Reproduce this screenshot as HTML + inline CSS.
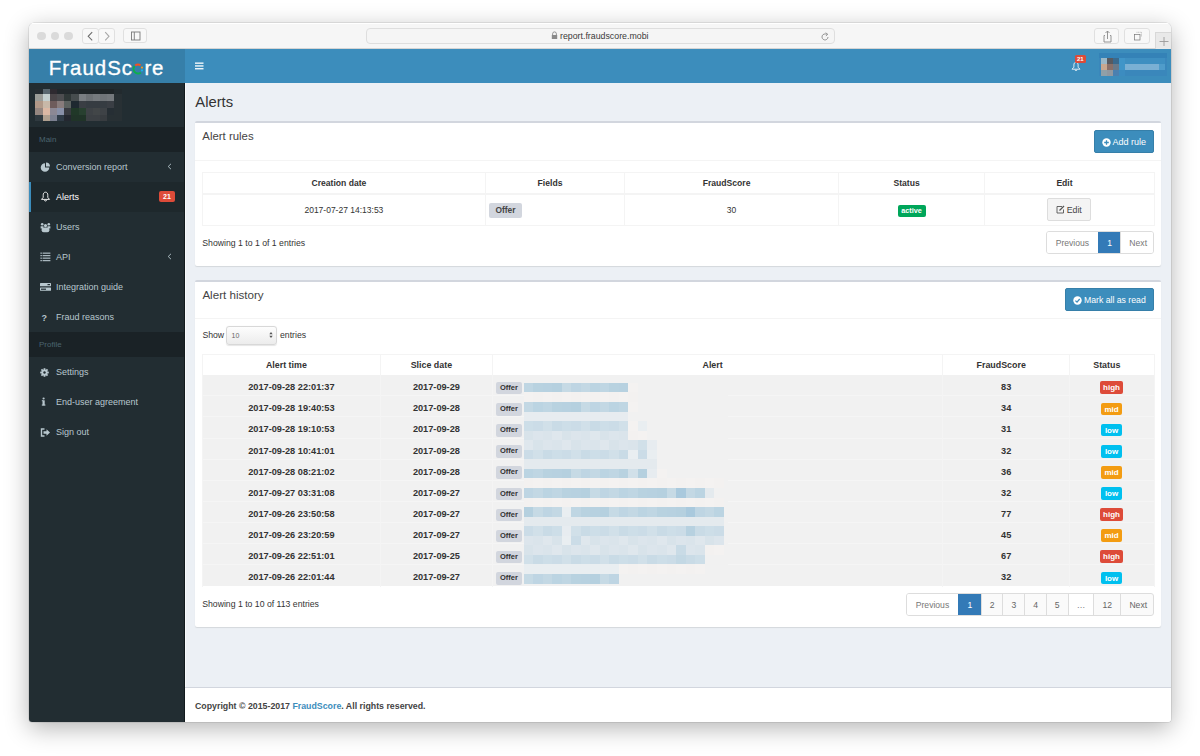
<!DOCTYPE html>
<html><head><meta charset="utf-8"><style>
*{box-sizing:border-box;margin:0;padding:0}
html,body{width:1200px;height:756px;overflow:hidden;background:#fff;font-family:"Liberation Sans",sans-serif;}
.a,.abs{position:absolute}
svg{display:block}
#win{position:absolute;left:29px;top:23px;width:1142px;height:699px;border-radius:5px 5px 3px 3px;overflow:hidden;box-shadow:0 6px 24px rgba(0,0,0,.30),0 0 0 0.5px rgba(0,0,0,.15);background:#ecf0f5}
#title{position:absolute;left:0;top:0;width:1142px;height:26px;background:#f6f6f6;border-bottom:1px solid #d4d4d4;box-shadow:inset 0 1px 0 #fff}
.dot{position:absolute;width:8px;height:8px;border-radius:50%;background:#dadada}
.tbtn{position:absolute;border:1px solid #e0e0e0;border-radius:3px;background:#f8f8f8}
#hdr{position:absolute;left:0;top:26px;width:1142px;height:34px;background:#3c8dbc}
#logo{position:absolute;left:0;top:0;width:156px;height:34px;background:#367fa9}
#side{position:absolute;left:0;top:60px;width:156px;height:639px;background:#222d32}
.sh{position:absolute;left:0;width:156px;height:25px;background:#1a2226;color:#4b646f;font-size:8px;line-height:26px;padding-left:10px}
.mi{position:absolute;left:0;width:156px;height:30px;color:#b8c7ce;font-size:9px;line-height:31px;padding-left:27px}
.mi.act{background:#1e282c;color:#fff;border-left:2px solid #3c8dbc;padding-left:25px}
.mi .ic{position:absolute;left:10px;top:9px;width:12px;height:12px;display:flex;align-items:center;justify-content:center}
.act .ic{left:9px}
.sbadge{position:absolute;left:128px;top:9px;width:16px;height:11px;background:#dd4b39;color:#fff;font-size:7px;font-weight:bold;line-height:11px;text-align:center;border-radius:2px}
.arr{position:absolute;left:138px;top:11px;width:6px;height:8px}
#foot{position:absolute;left:156px;top:664px;width:986px;height:35px;background:#fff;border-top:1px solid #d2d6de;font-size:8.8px;font-weight:bold;color:#444;line-height:36px;padding-left:10px}
.box{position:absolute;background:#fff;border-top:2px solid #d2d6de;border-radius:2px;box-shadow:0 1px 1px rgba(0,0,0,.1)}
.bt{position:absolute;font-size:11.5px;color:#444;line-height:14px;white-space:nowrap}
.btn{position:absolute;background:#3c8dbc;border:1px solid #367fa9;border-radius:2px;color:#fff;font-size:9px;line-height:21px;display:flex;align-items:center;justify-content:center;white-space:nowrap;padding-top:1.5px}
.t{position:absolute;white-space:nowrap;line-height:12px}
.th{font-size:8.6px;font-weight:bold;color:#333}
.td{font-size:8.5px;color:#333}
.tdb{font-size:9.4px;font-weight:bold;color:#333}
.lbl{position:absolute;background:#d2d6de;color:#444;font-weight:bold;border-radius:2px;text-align:center}
.bdg{position:absolute;color:#fff;font-weight:bold;font-size:8px;text-align:center;border-radius:2px}
.pg{position:absolute;border:1px solid #ddd;border-radius:3px;overflow:hidden;background:#fafafa}
.pgi{position:absolute;top:0;height:100%;font-size:8.6px;color:#666;text-align:center;border-left:1px solid #ddd;display:flex;align-items:center;justify-content:center}
.hl{position:absolute;height:1px}
.vl{position:absolute;width:1px}
</style></head><body>
<div id="win">
<div id="title">
<div class="dot" style="left:8.399999999999999px;top:8.699999999999996px;width:8.2px;height:8.2px"></div>
<div class="dot" style="left:21.9px;top:8.699999999999996px;width:8.2px;height:8.2px"></div>
<div class="dot" style="left:35.400000000000006px;top:8.699999999999996px;width:8.2px;height:8.2px"></div>
<div class="tbtn" style="left:52.5px;top:5.199999999999999px;width:17.299999999999997px;height:15.599999999999998px"><svg width="17" height="15" viewBox="0 0 17 15"><path d="M9.2 3.2L5.2 7.3 9.2 11.4" fill="none" stroke="#6f6f6f" stroke-width="1.1"/></svg></div>
<div class="tbtn" style="left:69.3px;top:5.199999999999999px;width:17.10000000000001px;height:15.599999999999998px"><svg width="17" height="15" viewBox="0 0 17 15"><path d="M6.2 3.2L10 7.3 6.2 11.4" fill="none" stroke="#a8a8a8" stroke-width="1.1"/></svg></div>
<div class="tbtn" style="left:93.7px;top:5.300000000000001px;width:24.299999999999997px;height:15.2px"><svg width="24" height="15" viewBox="0 0 24 15"><rect x="7.5" y="3" width="8.5" height="8" fill="none" stroke="#7a7a7a" stroke-width="0.9"/><line x1="10.3" y1="3" x2="10.3" y2="11" stroke="#7a7a7a" stroke-width="0.9"/></svg></div>
<div class="tbtn" style="left:336.8px;top:5.300000000000001px;width:469px;height:15.5px;background:#f5f5f5;border-color:#dedede;border-radius:4px"></div>
<div class="a" style="left:522px;top:8px"><svg width="7" height="9" viewBox="0 0 7 9"><path d="M1.6 4V2.8A1.9 1.9 0 0 1 5.4 2.8V4" fill="none" stroke="#8a8a8a" stroke-width="0.9"/><rect x="0.8" y="4" width="5.4" height="4" fill="#8a8a8a"/></svg></div>
<div class="t" style="left:531px;top:6.5px;font-size:8.8px;color:#3a3a3a;line-height:12px">report.fraudscore.mobi</div>
<div class="a" style="left:791px;top:8.5px"><svg width="10" height="10" viewBox="0 0 10 10"><path d="M8 5A3 3 0 1 1 6.6 2.4" fill="none" stroke="#8a8a8a" stroke-width="0.9"/><path d="M5.6 0.8L7.8 2.3 5.9 3.9" fill="none" stroke="#8a8a8a" stroke-width="0.9"/></svg></div>
<div class="tbtn" style="left:1064.8px;top:5.300000000000001px;width:25.40000000000009px;height:15.400000000000002px"><svg width="25" height="15" viewBox="0 0 25 15"><path d="M10 6.5H9V13H16V6.5H15" fill="none" stroke="#8a8a8a" stroke-width="0.9"/><path d="M12.5 10V2M10.5 4L12.5 2 14.5 4" fill="none" stroke="#8a8a8a" stroke-width="0.9"/></svg></div>
<div class="tbtn" style="left:1095px;top:5.300000000000001px;width:25.5px;height:15.400000000000002px"><svg width="25" height="15" viewBox="0 0 25 15"><rect x="9.5" y="5.5" width="5.5" height="5.5" fill="none" stroke="#777" stroke-width="0.7"/><path d="M11.5 3.3H16.5V8" fill="none" stroke="#999" stroke-width="0.6" stroke-dasharray="1 0.6"/></svg></div>
<div class="a" style="left:1126.3px;top:9.200000000000003px;width:20px;height:17px;background:#e9e9e9;border-left:1px solid #d8d8d8;border-top:1px solid #d8d8d8"><svg width="16" height="16" viewBox="0 0 16 16"><path d="M8 4V13M3.5 8.5H12.5" stroke="#9a9a9a" stroke-width="0.9"/></svg></div>
</div>
<div id="hdr">
<div id="logo"></div>
<div class="t" style="left:19.700000000000003px;top:7.900000000000001px;font-size:20.4px;line-height:22px;color:#fff;letter-spacing:1.05px;-webkit-text-stroke:0.35px #fff">FraudSc</div>
<div class="t" style="left:115.6px;top:7.900000000000001px;font-size:20.4px;line-height:22px;color:#fff;letter-spacing:0.6px;-webkit-text-stroke:0.35px #fff">re</div>
<div class="a" style="left:102.9px;top:14.200000000000003px"><svg width="12" height="12" viewBox="0 0 12 12"><path d="M3.2 2.6A4.4 4.4 0 0 1 8.6 2.4" fill="none" stroke="#f4511e" stroke-width="2"/><path d="M2.6 3.2A4.4 4.4 0 0 0 8.8 9.4" fill="none" stroke="#0db04b" stroke-width="2"/><circle cx="10" cy="4.6" r="1.1" fill="#f7941d"/><circle cx="10" cy="7.4" r="1.1" fill="#1ab1e6"/></svg></div>
<div class="a" style="left:166px;top:13px"><svg width="9" height="8" viewBox="0 0 9 8"><g fill="#fff"><rect x="0" y="0.5" width="8.5" height="1.3"/><rect x="0" y="3.3" width="8.5" height="1.3"/><rect x="0" y="6.1" width="8.5" height="1.3"/></g></svg></div>
<div class="a" style="left:1041.5px;top:11.700000000000003px"><svg width="10" height="10" viewBox="0 0 10 10"><path d="M5 1.2C3.4 1.2 2.9 2.6 2.9 4V6.2L1 8.2H9L7.1 6.2V4C7.1 2.6 6.6 1.2 5 1.2z" fill="none" stroke="#fff" stroke-width="0.8"/><path d="M4 8.6A1 1 0 0 0 6 8.6" fill="none" stroke="#fff" stroke-width="0.8"/></svg></div>
<div class="a" style="left:1046px;top:6px;width:10.7px;height:7.8px;background:#dd4b39;border-radius:1.5px;color:#fff;font-size:6px;font-weight:bold;line-height:8px;text-align:center">21</div>
<div class="a" style="left:1070.2px;top:3.7px;width:68.2px;height:23.8px;background:#3a87bb"></div>
<div class="a" style="left:1070.2px;top:3.7px;width:68.2px;height:5.3px;background:#3482b7"></div>
<div class="a" style="left:1072.0px;top:9.0px;width:6.2px;height:6.2px;background:#9ab8c8"></div>
<div class="a" style="left:1078.0px;top:9.0px;width:6.2px;height:6.2px;background:#585a60"></div>
<div class="a" style="left:1084.1px;top:9.0px;width:6.3px;height:6.2px;background:#3a6a8e"></div>
<div class="a" style="left:1090.2px;top:9.0px;width:6.2px;height:6.2px;background:#4095c8"></div>
<div class="a" style="left:1072.0px;top:15.0px;width:6.2px;height:6.2px;background:#c8a890"></div>
<div class="a" style="left:1078.0px;top:15.0px;width:6.2px;height:6.2px;background:#8a7068"></div>
<div class="a" style="left:1084.1px;top:15.0px;width:6.3px;height:6.2px;background:#6a7a8a"></div>
<div class="a" style="left:1090.2px;top:15.0px;width:6.2px;height:6.2px;background:#4095c8"></div>
<div class="a" style="left:1072.0px;top:21.0px;width:6.2px;height:6.2px;background:#90a0a8"></div>
<div class="a" style="left:1078.0px;top:21.0px;width:6.2px;height:6.2px;background:#9098a0"></div>
<div class="a" style="left:1084.1px;top:21.0px;width:6.3px;height:6.2px;background:#4a80b0"></div>
<div class="a" style="left:1090.2px;top:21.0px;width:6.2px;height:6.2px;background:#3c8cc0"></div>
<div class="a" style="left:1096.0px;top:15.0px;width:34.0px;height:6.0px;background:#7ab0d4"></div>
<div class="a" style="left:1130.0px;top:15.0px;width:6.0px;height:6.0px;background:#4f9cca"></div>
<div class="a" style="left:1096.0px;top:9.0px;width:40.0px;height:6.0px;background:#3e8fc1"></div>
</div>
<div id="side">
<div class="abs" style="left:6px;top:6px;width:87px;height:32px">
<div class="abs" style="left:0px;top:0px;width:8px;height:5px;background:#262e33"></div>
<div class="abs" style="left:8px;top:0px;width:7px;height:5px;background:#5a6870"></div>
<div class="abs" style="left:15px;top:0px;width:7px;height:5px;background:#2e2a30"></div>
<div class="abs" style="left:22px;top:0px;width:7px;height:5px;background:#22282c"></div>
<div class="abs" style="left:29px;top:0px;width:7px;height:5px;background:#22282c"></div>
<div class="abs" style="left:36px;top:0px;width:8px;height:5px;background:#22282c"></div>
<div class="abs" style="left:44px;top:0px;width:7px;height:5px;background:#1f2528"></div>
<div class="abs" style="left:51px;top:0px;width:7px;height:5px;background:#1f2528"></div>
<div class="abs" style="left:58px;top:0px;width:7px;height:5px;background:#1f2528"></div>
<div class="abs" style="left:65px;top:0px;width:7px;height:5px;background:#1f2528"></div>
<div class="abs" style="left:72px;top:0px;width:7px;height:5px;background:#1f2528"></div>
<div class="abs" style="left:79px;top:0px;width:8px;height:5px;background:#222a2e"></div>
<div class="abs" style="left:0px;top:5px;width:8px;height:7px;background:#9a9c98"></div>
<div class="abs" style="left:8px;top:5px;width:7px;height:7px;background:#c4d0d0"></div>
<div class="abs" style="left:15px;top:5px;width:7px;height:7px;background:#4a4548"></div>
<div class="abs" style="left:22px;top:5px;width:7px;height:7px;background:#4d4d50"></div>
<div class="abs" style="left:29px;top:5px;width:7px;height:7px;background:#303838"></div>
<div class="abs" style="left:36px;top:5px;width:8px;height:7px;background:#464c4e"></div>
<div class="abs" style="left:44px;top:5px;width:7px;height:7px;background:#7a7e82"></div>
<div class="abs" style="left:51px;top:5px;width:7px;height:7px;background:#6e7276"></div>
<div class="abs" style="left:58px;top:5px;width:7px;height:7px;background:#767a7e"></div>
<div class="abs" style="left:65px;top:5px;width:7px;height:7px;background:#707478"></div>
<div class="abs" style="left:72px;top:5px;width:7px;height:7px;background:#74787c"></div>
<div class="abs" style="left:79px;top:5px;width:8px;height:7px;background:#283034"></div>
<div class="abs" style="left:0px;top:12px;width:8px;height:7px;background:#b09888"></div>
<div class="abs" style="left:8px;top:12px;width:7px;height:7px;background:#c8b8a8"></div>
<div class="abs" style="left:15px;top:12px;width:7px;height:7px;background:#6e5c5c"></div>
<div class="abs" style="left:22px;top:12px;width:7px;height:7px;background:#887c7c"></div>
<div class="abs" style="left:29px;top:12px;width:7px;height:7px;background:#5c6260"></div>
<div class="abs" style="left:36px;top:12px;width:8px;height:7px;background:#1e2830"></div>
<div class="abs" style="left:44px;top:12px;width:7px;height:7px;background:#3a3e44"></div>
<div class="abs" style="left:51px;top:12px;width:7px;height:7px;background:#363c42"></div>
<div class="abs" style="left:58px;top:12px;width:7px;height:7px;background:#363c42"></div>
<div class="abs" style="left:65px;top:12px;width:7px;height:7px;background:#363c42"></div>
<div class="abs" style="left:72px;top:12px;width:7px;height:7px;background:#3a3e44"></div>
<div class="abs" style="left:79px;top:12px;width:8px;height:7px;background:#283034"></div>
<div class="abs" style="left:0px;top:19px;width:8px;height:7px;background:#948680"></div>
<div class="abs" style="left:8px;top:19px;width:7px;height:7px;background:#dcb8a4"></div>
<div class="abs" style="left:15px;top:19px;width:7px;height:7px;background:#8c8894"></div>
<div class="abs" style="left:22px;top:19px;width:7px;height:7px;background:#8890a8"></div>
<div class="abs" style="left:29px;top:19px;width:7px;height:7px;background:#383a40"></div>
<div class="abs" style="left:36px;top:19px;width:8px;height:7px;background:#203828"></div>
<div class="abs" style="left:44px;top:19px;width:7px;height:7px;background:#284030"></div>
<div class="abs" style="left:51px;top:19px;width:7px;height:7px;background:#3e4246"></div>
<div class="abs" style="left:58px;top:19px;width:7px;height:7px;background:#424648"></div>
<div class="abs" style="left:65px;top:19px;width:7px;height:7px;background:#3e4246"></div>
<div class="abs" style="left:72px;top:19px;width:7px;height:7px;background:#262e34"></div>
<div class="abs" style="left:79px;top:19px;width:8px;height:7px;background:#283034"></div>
<div class="abs" style="left:0px;top:26px;width:8px;height:6px;background:#303a40"></div>
<div class="abs" style="left:8px;top:26px;width:7px;height:6px;background:#b0a090"></div>
<div class="abs" style="left:15px;top:26px;width:7px;height:6px;background:#7c8090"></div>
<div class="abs" style="left:22px;top:26px;width:7px;height:6px;background:#303c48"></div>
<div class="abs" style="left:29px;top:26px;width:7px;height:6px;background:#242830"></div>
<div class="abs" style="left:36px;top:26px;width:8px;height:6px;background:#203428"></div>
<div class="abs" style="left:44px;top:26px;width:7px;height:6px;background:#203428"></div>
<div class="abs" style="left:51px;top:26px;width:7px;height:6px;background:#3c4044"></div>
<div class="abs" style="left:58px;top:26px;width:7px;height:6px;background:#3c4044"></div>
<div class="abs" style="left:65px;top:26px;width:7px;height:6px;background:#383c40"></div>
<div class="abs" style="left:72px;top:26px;width:7px;height:6px;background:#283034"></div>
<div class="abs" style="left:79px;top:26px;width:8px;height:6px;background:#283034"></div>
</div>
<div class="sh" style="top:44px">Main</div>
<div class="mi" style="top:69px"><span class="ic"><svg width="11" height="11" viewBox="0 0 11 11"><path d="M5 1.2A4.3 4.3 0 1 0 9.3 5.5H5z" fill="#b8c7ce"/><path d="M6 0.5V4.6H10A4.2 4.2 0 0 0 6 0.5z" fill="#b8c7ce"/></svg></span>Conversion report<span class="arr"><svg width="5" height="7" viewBox="0 0 5 7"><path d="M4 0.8L1.2 3.5 4 6.2" fill="none" stroke="#b8c7ce" stroke-width="0.9"/></svg></span></div>
<div class="mi act" style="top:99px"><span class="ic"><svg width="11" height="11" viewBox="0 0 11 11" style="margin-left:-2px;margin-top:-1px"><path d="M5.5 1.2C3.7 1.2 3.2 2.7 3.2 4.3V6.4L1.5 8.4H9.5L7.8 6.4V4.3C7.8 2.7 7.3 1.2 5.5 1.2z" fill="none" stroke="#fff" stroke-width="0.9"/><path d="M4.5 9A1 1 0 0 0 6.5 9" fill="none" stroke="#fff" stroke-width="0.9"/></svg></span>Alerts<span class="sbadge">21</span></div>
<div class="mi" style="top:129px"><span class="ic"><svg width="11" height="11" viewBox="0 0 11 11" style="margin-left:0.5px"><g fill="#b8c7ce"><circle cx="5.5" cy="3.6" r="1.6"/><circle cx="2.2" cy="2.2" r="1.3"/><circle cx="8.8" cy="2.2" r="1.3"/><path d="M0.6 4.2H3.6L3.2 6.5H0.6z"/><path d="M10.4 4.2H7.4L7.8 6.5H10.4z"/><rect x="1.6" y="5.6" width="7.8" height="4.6" rx="2"/></g></svg></span>Users</div>
<div class="mi" style="top:159px"><span class="ic"><svg width="11" height="10" viewBox="0 0 11 10" style="margin-left:1px"><g fill="#b8c7ce"><rect x="0.4" y="0.6" width="1.5" height="1.1"/><rect x="2.6" y="0.6" width="7.8" height="1.1"/><rect x="0.4" y="3.1" width="1.5" height="1.1"/><rect x="2.6" y="3.1" width="7.8" height="1.1"/><rect x="0.4" y="5.6" width="1.5" height="1.1"/><rect x="2.6" y="5.6" width="7.8" height="1.1"/><rect x="0.4" y="8.1" width="1.5" height="1.1"/><rect x="2.6" y="8.1" width="7.8" height="1.1"/></g></svg></span>API<span class="arr"><svg width="5" height="7" viewBox="0 0 5 7"><path d="M4 0.8L1.2 3.5 4 6.2" fill="none" stroke="#b8c7ce" stroke-width="0.9"/></svg></span></div>
<div class="mi" style="top:189px"><span class="ic"><svg width="11" height="10" viewBox="0 0 11 10"><g fill="#b8c7ce"><rect x="0" y="1" width="11" height="3.2" rx="0.5"/><rect x="0" y="5.6" width="11" height="3.2" rx="0.5"/></g><rect x="1" y="6.6" width="5" height="1.2" fill="#222d32"/><rect x="7.5" y="2" width="2.5" height="1.2" fill="#222d32"/></svg></span>Integration guide</div>
<div class="mi" style="top:219px"><span class="ic"><svg width="11" height="11" viewBox="0 0 11 11"><text x="4.3" y="8.5" font-family="Liberation Sans" font-weight="bold" font-size="9" fill="#b8c7ce" text-anchor="middle">?</text></svg></span>Fraud reasons</div>
<div class="sh" style="top:249px">Profile</div>
<div class="mi" style="top:274px"><span class="ic"><svg width="11" height="11" viewBox="0 0 11 11" style="margin-left:-1px"><g fill="#b8c7ce"><circle cx="5.5" cy="5.5" r="3.1"/><rect x="4.6" y="1.2" width="1.8" height="8.6"/><rect x="1.2" y="4.6" width="8.6" height="1.8"/><rect x="4.6" y="1.2" width="1.8" height="8.6" transform="rotate(45 5.5 5.5)"/><rect x="4.6" y="1.2" width="1.8" height="8.6" transform="rotate(-45 5.5 5.5)"/></g><circle cx="5.5" cy="5.5" r="1.2" fill="#222d32"/></svg></span>Settings</div>
<div class="mi" style="top:304px"><span class="ic"><svg width="11" height="11" viewBox="0 0 11 11"><g fill="#b8c7ce"><circle cx="3.6" cy="1.5" r="1.1"/><rect x="2.5" y="3.3" width="2.2" height="5"/><rect x="1.8" y="7.5" width="3.6" height="1.1"/><rect x="1.8" y="3.3" width="1.3" height="0.9"/></g></svg></span>End-user agreement</div>
<div class="mi" style="top:334px"><span class="ic"><svg width="11" height="11" viewBox="0 0 11 11"><path d="M4.5 2H1.5V9H4.5" fill="none" stroke="#b8c7ce" stroke-width="1.4"/><path d="M3.5 4.3H6.5V2.3L10 5.5 6.5 8.7V6.7H3.5z" fill="#b8c7ce"/></svg></span>Sign out</div>
  </div>
<div class="a" style="left:155.2px;top:60.0px;width:0.8px;height:638.5px;background:#121a1d"></div>
<div class="a" style="left:156.0px;top:60.0px;width:1.2px;height:604.0px;background:#f8f9fb"></div>
<div class="t " style="left:166.3px;top:73.3px;font-size:14.8px;color:#333">Alerts</div>
<div class="box" style="left:166px;top:98px;width:966px;height:144.5px"></div>
<div class="a" style="left:166.0px;top:137.0px;width:966.0px;height:1.0px;background:#f4f4f4"></div>
<div class="t " style="left:173.3px;top:107.4px;font-size:11.4px;color:#444">Alert rules</div>
<div class="btn" style="left:1065px;top:107px;width:60px;height:23px"><svg width="9" height="9" viewBox="0 0 9 9" style="margin-right:1.5px"><circle cx="4.5" cy="4.5" r="4.2" fill="#fff"/><path d="M4.5 2.2V6.8M2.2 4.5H6.8" stroke="#3c8dbc" stroke-width="1.3"/></svg>Add rule</div>
<div class="a" style="left:173.3px;top:149.0px;width:952.1px;height:1.0px;background:#f4f4f4"></div>
<div class="a" style="left:173.3px;top:170.0px;width:952.1px;height:2.0px;background:#f4f4f4"></div>
<div class="a" style="left:173.3px;top:202.0px;width:952.1px;height:1.0px;background:#f4f4f4"></div>
<div class="a" style="left:172.8px;top:149.0px;width:1.0px;height:54.0px;background:#f4f4f4"></div>
<div class="a" style="left:455.9px;top:149.0px;width:1.0px;height:54.0px;background:#f4f4f4"></div>
<div class="a" style="left:595.0px;top:149.0px;width:1.0px;height:54.0px;background:#f4f4f4"></div>
<div class="a" style="left:809.3px;top:149.0px;width:1.0px;height:54.0px;background:#f4f4f4"></div>
<div class="a" style="left:955.0px;top:149.0px;width:1.0px;height:54.0px;background:#f4f4f4"></div>
<div class="a" style="left:1124.9px;top:149.0px;width:1.0px;height:54.0px;background:#f4f4f4"></div>
<div class="t th" style="left:159.9px;top:154.3px;width:300px;text-align:center;font-size:8.6px;">Creation date</div>
<div class="t th" style="left:371.0px;top:154.3px;width:300px;text-align:center;font-size:8.6px;">Fields</div>
<div class="t th" style="left:547.6px;top:154.3px;width:300px;text-align:center;font-size:8.6px;">FraudScore</div>
<div class="t th" style="left:727.6px;top:154.3px;width:300px;text-align:center;font-size:8.6px;">Status</div>
<div class="t th" style="left:885.5px;top:154.3px;width:300px;text-align:center;font-size:8.6px;">Edit</div>
<div class="t td" style="left:164.9px;top:181.3px;width:300px;text-align:center;font-size:8.5px;">2017-07-27 14:13:53</div>
<div class="lbl" style="left:459.75px;top:179.5px;width:33.3px;height:15.8px;font-size:8.4px;line-height:15.8px">Offer</div>
<div class="t td" style="left:552.6px;top:181.3px;width:300px;text-align:center;font-size:8.5px;">30</div>
<div class="bdg" style="left:868.5px;top:181.5px;width:28px;height:12px;line-height:12px;background:#00a65a;font-size:7.3px">active</div>
<div class="a" style="left:1018px;top:175px;width:44px;height:23px;border:1px solid #ddd;background:#f4f4f4;border-radius:2px;display:flex;align-items:center;justify-content:center;font-size:8.8px;color:#444"><svg width="9" height="9" viewBox="0 0 9 9" style="margin-right:1.5px"><path d="M6 1.5H1V8H7.5V4.5" fill="none" stroke="#555" stroke-width="0.9"/><path d="M3.5 5.5L8 1" stroke="#555" stroke-width="1.2"/></svg>Edit</div>
<div class="t td" style="left:173.3px;top:213.6px;font-size:8.7px;">Showing 1 to 1 of 1 entries</div>
<div class="pg" style="left:1016.5px;top:208.2px;width:108.9px;height:23.1px"><div class="pgi" style="left:0;width:51.8px;border-left:none;background:#fff;color:#777">Previous</div><div class="pgi" style="left:51.8px;width:21.7px;background:#337ab7;color:#fff;border-color:#337ab7">1</div><div class="pgi" style="left:73.5px;width:35.4px;background:#fff;color:#777">Next</div></div>
<div class="box" style="left:166px;top:256.5px;width:966px;height:347.7px"></div>
<div class="a" style="left:166.0px;top:294.5px;width:966.0px;height:1.0px;background:#f4f4f4"></div>
<div class="t " style="left:173.4px;top:265.8px;font-size:11.6px;color:#444">Alert history</div>
<div class="btn" style="left:1036.1px;top:265.1px;width:89px;height:23px;font-size:8.7px"><svg width="9" height="9" viewBox="0 0 9 9" style="margin-right:1.5px"><circle cx="4.5" cy="4.5" r="4.2" fill="#fff"/><path d="M2.4 4.6L4 6.1 6.7 3" fill="none" stroke="#3c8dbc" stroke-width="1.3"/></svg>Mark all as read</div>
<div class="t td" style="left:173.4px;top:306.4px;font-size:8.7px;">Show</div>
<div class="a" style="left:197.2px;top:302.6px;width:50.8px;height:19.8px;border:1px solid #d8d8d8;border-radius:3px;background:linear-gradient(#fdfdfd,#ececec);box-shadow:0 0.5px 1px rgba(0,0,0,.1)"></div>
<div class="t td" style="left:202.5px;top:307.2px;font-size:7px;color:#666">10</div>
<div class="a" style="left:239.5px;top:308px"><svg width="4" height="8" viewBox="0 0 4 8"><path d="M0.3 3.2L2 1 3.7 3.2zM0.3 4.8L2 7 3.7 4.8z" fill="#555"/></svg></div>
<div class="t td" style="left:251.0px;top:306.4px;font-size:8.7px;">entries</div>
<div class="a" style="left:173.4px;top:330.8px;width:951.6px;height:1.0px;background:#f4f4f4"></div>
<div class="a" style="left:173.4px;top:351.6px;width:951.6px;height:211.9px;background:#f1f1f1"></div>
<div class="a" style="left:172.9px;top:330.8px;width:1.0px;height:20.8px;background:#f4f4f4"></div>
<div class="a" style="left:350.8px;top:330.8px;width:1.0px;height:20.8px;background:#f4f4f4"></div>
<div class="a" style="left:463.0px;top:330.8px;width:1.0px;height:20.8px;background:#f4f4f4"></div>
<div class="a" style="left:913.2px;top:330.8px;width:1.0px;height:20.8px;background:#f4f4f4"></div>
<div class="a" style="left:1040.2px;top:330.8px;width:1.0px;height:20.8px;background:#f4f4f4"></div>
<div class="a" style="left:1124.5px;top:330.8px;width:1.0px;height:20.8px;background:#f4f4f4"></div>
<div class="t th" style="left:107.4px;top:336.3px;width:300px;text-align:center;font-size:8.9px;">Alert time</div>
<div class="t th" style="left:252.4px;top:336.3px;width:300px;text-align:center;font-size:8.9px;">Slice date</div>
<div class="t th" style="left:533.6px;top:336.3px;width:300px;text-align:center;font-size:8.9px;">Alert</div>
<div class="t th" style="left:822.2px;top:336.3px;width:300px;text-align:center;font-size:8.9px;">FraudScore</div>
<div class="t th" style="left:927.8px;top:336.3px;width:300px;text-align:center;font-size:8.9px;">Status</div>
<div class="t tdb" style="left:112.4px;top:358.1px;width:300px;text-align:center;font-size:9.2px;">2017-09-28 22:01:37</div>
<div class="t tdb" style="left:257.4px;top:358.1px;width:300px;text-align:center;font-size:9.2px;">2017-09-29</div>
<div class="t tdb" style="left:827.2px;top:358.1px;width:300px;text-align:center;font-size:9.2px;">83</div>
<div class="lbl" style="left:467.2px;top:358.9px;width:25.6px;height:12.5px;font-size:7.5px;line-height:12.5px;color:#333">Offer</div>
<div class="bdg" style="left:1071.0px;top:358.4px;width:23px;height:12.8px;line-height:14px;background:#dd4b39">high</div>
<div class="a" style="left:173.4px;top:372.2px;width:951.6px;height:1.0px;background:#f5f5f5"></div>
<div class="t tdb" style="left:112.4px;top:379.3px;width:300px;text-align:center;font-size:9.2px;">2017-09-28 19:40:53</div>
<div class="t tdb" style="left:257.4px;top:379.3px;width:300px;text-align:center;font-size:9.2px;">2017-09-28</div>
<div class="t tdb" style="left:827.2px;top:379.3px;width:300px;text-align:center;font-size:9.2px;">34</div>
<div class="lbl" style="left:467.2px;top:380.0px;width:25.6px;height:12.5px;font-size:7.5px;line-height:12.5px;color:#333">Offer</div>
<div class="bdg" style="left:1071.8px;top:379.5px;width:21.5px;height:12.8px;line-height:14px;background:#f39c12">mid</div>
<div class="a" style="left:173.4px;top:393.4px;width:951.6px;height:1.0px;background:#f5f5f5"></div>
<div class="t tdb" style="left:112.4px;top:400.4px;width:300px;text-align:center;font-size:9.2px;">2017-09-28 19:10:53</div>
<div class="t tdb" style="left:257.4px;top:400.4px;width:300px;text-align:center;font-size:9.2px;">2017-09-28</div>
<div class="t tdb" style="left:827.2px;top:400.4px;width:300px;text-align:center;font-size:9.2px;">31</div>
<div class="lbl" style="left:467.2px;top:401.2px;width:25.6px;height:12.5px;font-size:7.5px;line-height:12.5px;color:#333">Offer</div>
<div class="bdg" style="left:1071.8px;top:400.7px;width:21.5px;height:12.8px;line-height:14px;background:#00c0ef">low</div>
<div class="a" style="left:173.4px;top:414.5px;width:951.6px;height:1.0px;background:#f5f5f5"></div>
<div class="t tdb" style="left:112.4px;top:421.5px;width:300px;text-align:center;font-size:9.2px;">2017-09-28 10:41:01</div>
<div class="t tdb" style="left:257.4px;top:421.5px;width:300px;text-align:center;font-size:9.2px;">2017-09-28</div>
<div class="t tdb" style="left:827.2px;top:421.5px;width:300px;text-align:center;font-size:9.2px;">32</div>
<div class="lbl" style="left:467.2px;top:422.3px;width:25.6px;height:12.5px;font-size:7.5px;line-height:12.5px;color:#333">Offer</div>
<div class="bdg" style="left:1071.8px;top:421.8px;width:21.5px;height:12.8px;line-height:14px;background:#00c0ef">low</div>
<div class="a" style="left:173.4px;top:435.6px;width:951.6px;height:1.0px;background:#f5f5f5"></div>
<div class="t tdb" style="left:112.4px;top:442.7px;width:300px;text-align:center;font-size:9.2px;">2017-09-28 08:21:02</div>
<div class="t tdb" style="left:257.4px;top:442.7px;width:300px;text-align:center;font-size:9.2px;">2017-09-28</div>
<div class="t tdb" style="left:827.2px;top:442.7px;width:300px;text-align:center;font-size:9.2px;">36</div>
<div class="lbl" style="left:467.2px;top:443.4px;width:25.6px;height:12.5px;font-size:7.5px;line-height:12.5px;color:#333">Offer</div>
<div class="bdg" style="left:1071.8px;top:442.9px;width:21.5px;height:12.8px;line-height:14px;background:#f39c12">mid</div>
<div class="a" style="left:173.4px;top:456.8px;width:951.6px;height:1.0px;background:#f5f5f5"></div>
<div class="t tdb" style="left:112.4px;top:463.8px;width:300px;text-align:center;font-size:9.2px;">2017-09-27 03:31:08</div>
<div class="t tdb" style="left:257.4px;top:463.8px;width:300px;text-align:center;font-size:9.2px;">2017-09-27</div>
<div class="t tdb" style="left:827.2px;top:463.8px;width:300px;text-align:center;font-size:9.2px;">32</div>
<div class="lbl" style="left:467.2px;top:464.6px;width:25.6px;height:12.5px;font-size:7.5px;line-height:12.5px;color:#333">Offer</div>
<div class="bdg" style="left:1071.8px;top:464.1px;width:21.5px;height:12.8px;line-height:14px;background:#00c0ef">low</div>
<div class="a" style="left:173.4px;top:477.9px;width:951.6px;height:1.0px;background:#f5f5f5"></div>
<div class="t tdb" style="left:112.4px;top:484.9px;width:300px;text-align:center;font-size:9.2px;">2017-09-26 23:50:58</div>
<div class="t tdb" style="left:257.4px;top:484.9px;width:300px;text-align:center;font-size:9.2px;">2017-09-27</div>
<div class="t tdb" style="left:827.2px;top:484.9px;width:300px;text-align:center;font-size:9.2px;">77</div>
<div class="lbl" style="left:467.2px;top:485.7px;width:25.6px;height:12.5px;font-size:7.5px;line-height:12.5px;color:#333">Offer</div>
<div class="bdg" style="left:1071.0px;top:485.2px;width:23px;height:12.8px;line-height:14px;background:#dd4b39">high</div>
<div class="a" style="left:173.4px;top:499.0px;width:951.6px;height:1.0px;background:#f5f5f5"></div>
<div class="t tdb" style="left:112.4px;top:506.1px;width:300px;text-align:center;font-size:9.2px;">2017-09-26 23:20:59</div>
<div class="t tdb" style="left:257.4px;top:506.1px;width:300px;text-align:center;font-size:9.2px;">2017-09-27</div>
<div class="t tdb" style="left:827.2px;top:506.1px;width:300px;text-align:center;font-size:9.2px;">45</div>
<div class="lbl" style="left:467.2px;top:506.8px;width:25.6px;height:12.5px;font-size:7.5px;line-height:12.5px;color:#333">Offer</div>
<div class="bdg" style="left:1071.8px;top:506.3px;width:21.5px;height:12.8px;line-height:14px;background:#f39c12">mid</div>
<div class="a" style="left:173.4px;top:520.1px;width:951.6px;height:1.0px;background:#f5f5f5"></div>
<div class="t tdb" style="left:112.4px;top:527.2px;width:300px;text-align:center;font-size:9.2px;">2017-09-26 22:51:01</div>
<div class="t tdb" style="left:257.4px;top:527.2px;width:300px;text-align:center;font-size:9.2px;">2017-09-25</div>
<div class="t tdb" style="left:827.2px;top:527.2px;width:300px;text-align:center;font-size:9.2px;">67</div>
<div class="lbl" style="left:467.2px;top:527.9px;width:25.6px;height:12.5px;font-size:7.5px;line-height:12.5px;color:#333">Offer</div>
<div class="bdg" style="left:1071.0px;top:527.4px;width:23px;height:12.8px;line-height:14px;background:#dd4b39">high</div>
<div class="a" style="left:173.4px;top:541.3px;width:951.6px;height:1.0px;background:#f5f5f5"></div>
<div class="t tdb" style="left:112.4px;top:548.3px;width:300px;text-align:center;font-size:9.2px;">2017-09-26 22:01:44</div>
<div class="t tdb" style="left:257.4px;top:548.3px;width:300px;text-align:center;font-size:9.2px;">2017-09-27</div>
<div class="t tdb" style="left:827.2px;top:548.3px;width:300px;text-align:center;font-size:9.2px;">32</div>
<div class="lbl" style="left:467.2px;top:549.1px;width:25.6px;height:12.5px;font-size:7.5px;line-height:12.5px;color:#333">Offer</div>
<div class="bdg" style="left:1071.8px;top:548.6px;width:21.5px;height:12.8px;line-height:14px;background:#00c0ef">low</div>
<div class="a" style="left:172.9px;top:351.6px;width:1.0px;height:212.4px;background:#f4f4f4"></div>
<div class="a" style="left:350.8px;top:351.6px;width:1.0px;height:212.4px;background:#f4f4f4"></div>
<div class="a" style="left:463.0px;top:351.6px;width:1.0px;height:212.4px;background:#f4f4f4"></div>
<div class="a" style="left:913.2px;top:351.6px;width:1.0px;height:212.4px;background:#f4f4f4"></div>
<div class="a" style="left:1040.2px;top:351.6px;width:1.0px;height:212.4px;background:#f4f4f4"></div>
<div class="a" style="left:1124.5px;top:351.6px;width:1.0px;height:212.4px;background:#f4f4f4"></div>
<div class="a" style="left:494.85px;top:359.90px;width:9.81px;height:9.86px;background:#bfd6e3"></div>
<div class="a" style="left:504.36px;top:359.90px;width:9.81px;height:9.86px;background:#b8d2e0"></div>
<div class="a" style="left:513.87px;top:359.90px;width:9.81px;height:9.86px;background:#b7d1e0"></div>
<div class="a" style="left:523.38px;top:359.90px;width:9.81px;height:9.86px;background:#b5d0df"></div>
<div class="a" style="left:532.89px;top:359.90px;width:9.81px;height:9.86px;background:#c6dae5"></div>
<div class="a" style="left:542.40px;top:359.90px;width:9.81px;height:9.86px;background:#bed5e3"></div>
<div class="a" style="left:551.91px;top:359.90px;width:9.81px;height:9.86px;background:#c3d8e4"></div>
<div class="a" style="left:561.42px;top:359.90px;width:9.81px;height:9.86px;background:#bbd4e2"></div>
<div class="a" style="left:570.93px;top:359.90px;width:9.81px;height:9.86px;background:#bfd6e3"></div>
<div class="a" style="left:580.44px;top:359.90px;width:9.81px;height:9.86px;background:#b8d2e0"></div>
<div class="a" style="left:589.95px;top:359.90px;width:9.81px;height:9.86px;background:#b7d1e0"></div>
<div class="a" style="left:599.46px;top:359.90px;width:9.81px;height:9.86px;background:#f4f2f1"></div>
<div class="a" style="left:608.97px;top:359.90px;width:9.81px;height:9.86px;background:#f1f1f1"></div>
<div class="a" style="left:618.48px;top:359.90px;width:9.81px;height:9.86px;background:#f1f1f1"></div>
<div class="a" style="left:627.99px;top:359.90px;width:9.81px;height:9.86px;background:#f1f1f1"></div>
<div class="a" style="left:637.50px;top:359.90px;width:9.81px;height:9.86px;background:#f1f1f1"></div>
<div class="a" style="left:647.01px;top:359.90px;width:9.81px;height:9.86px;background:#f1f1f1"></div>
<div class="a" style="left:656.52px;top:359.90px;width:9.81px;height:9.86px;background:#f1f1f1"></div>
<div class="a" style="left:666.03px;top:359.90px;width:9.81px;height:9.86px;background:#f1f1f1"></div>
<div class="a" style="left:675.54px;top:359.90px;width:9.81px;height:9.86px;background:#f1f1f1"></div>
<div class="a" style="left:685.05px;top:359.90px;width:9.81px;height:9.86px;background:#f1f1f1"></div>
<div class="a" style="left:694.56px;top:359.90px;width:4.44px;height:9.86px;background:#f1f1f1"></div>
<div class="a" style="left:494.85px;top:369.46px;width:9.81px;height:9.86px;background:#f4f2f1"></div>
<div class="a" style="left:504.36px;top:369.46px;width:9.81px;height:9.86px;background:#f3f1f0"></div>
<div class="a" style="left:513.87px;top:369.46px;width:9.81px;height:9.86px;background:#f4f2f1"></div>
<div class="a" style="left:523.38px;top:369.46px;width:9.81px;height:9.86px;background:#f3f1f0"></div>
<div class="a" style="left:532.89px;top:369.46px;width:9.81px;height:9.86px;background:#f4f2f1"></div>
<div class="a" style="left:542.40px;top:369.46px;width:9.81px;height:9.86px;background:#f3f1f0"></div>
<div class="a" style="left:551.91px;top:369.46px;width:9.81px;height:9.86px;background:#f4f2f1"></div>
<div class="a" style="left:561.42px;top:369.46px;width:9.81px;height:9.86px;background:#f3f1f0"></div>
<div class="a" style="left:570.93px;top:369.46px;width:9.81px;height:9.86px;background:#f4f2f1"></div>
<div class="a" style="left:580.44px;top:369.46px;width:9.81px;height:9.86px;background:#f3f1f0"></div>
<div class="a" style="left:589.95px;top:369.46px;width:9.81px;height:9.86px;background:#f4f2f1"></div>
<div class="a" style="left:599.46px;top:369.46px;width:9.81px;height:9.86px;background:#f3f1f0"></div>
<div class="a" style="left:608.97px;top:369.46px;width:9.81px;height:9.86px;background:#f1f1f1"></div>
<div class="a" style="left:618.48px;top:369.46px;width:9.81px;height:9.86px;background:#f1f1f1"></div>
<div class="a" style="left:627.99px;top:369.46px;width:9.81px;height:9.86px;background:#f1f1f1"></div>
<div class="a" style="left:637.50px;top:369.46px;width:9.81px;height:9.86px;background:#f1f1f1"></div>
<div class="a" style="left:647.01px;top:369.46px;width:9.81px;height:9.86px;background:#f1f1f1"></div>
<div class="a" style="left:656.52px;top:369.46px;width:9.81px;height:9.86px;background:#f1f1f1"></div>
<div class="a" style="left:666.03px;top:369.46px;width:9.81px;height:9.86px;background:#f1f1f1"></div>
<div class="a" style="left:675.54px;top:369.46px;width:9.81px;height:9.86px;background:#f1f1f1"></div>
<div class="a" style="left:685.05px;top:369.46px;width:9.81px;height:9.86px;background:#f1f1f1"></div>
<div class="a" style="left:694.56px;top:369.46px;width:4.44px;height:9.86px;background:#f1f1f1"></div>
<div class="a" style="left:494.85px;top:379.01px;width:9.81px;height:9.86px;background:#c3d8e4"></div>
<div class="a" style="left:504.36px;top:379.01px;width:9.81px;height:9.86px;background:#bbd4e2"></div>
<div class="a" style="left:513.87px;top:379.01px;width:9.81px;height:9.86px;background:#bfd6e3"></div>
<div class="a" style="left:523.38px;top:379.01px;width:9.81px;height:9.86px;background:#b8d2e0"></div>
<div class="a" style="left:532.89px;top:379.01px;width:9.81px;height:9.86px;background:#b7d1e0"></div>
<div class="a" style="left:542.40px;top:379.01px;width:9.81px;height:9.86px;background:#b5d0df"></div>
<div class="a" style="left:551.91px;top:379.01px;width:9.81px;height:9.86px;background:#c6dae5"></div>
<div class="a" style="left:561.42px;top:379.01px;width:9.81px;height:9.86px;background:#bed5e3"></div>
<div class="a" style="left:570.93px;top:379.01px;width:9.81px;height:9.86px;background:#c3d8e4"></div>
<div class="a" style="left:580.44px;top:379.01px;width:9.81px;height:9.86px;background:#bbd4e2"></div>
<div class="a" style="left:589.95px;top:379.01px;width:9.81px;height:9.86px;background:#bfd6e3"></div>
<div class="a" style="left:599.46px;top:379.01px;width:9.81px;height:9.86px;background:#f4f2f1"></div>
<div class="a" style="left:608.97px;top:379.01px;width:9.81px;height:9.86px;background:#f1f1f1"></div>
<div class="a" style="left:618.48px;top:379.01px;width:9.81px;height:9.86px;background:#f1f1f1"></div>
<div class="a" style="left:627.99px;top:379.01px;width:9.81px;height:9.86px;background:#f1f1f1"></div>
<div class="a" style="left:637.50px;top:379.01px;width:9.81px;height:9.86px;background:#f1f1f1"></div>
<div class="a" style="left:647.01px;top:379.01px;width:9.81px;height:9.86px;background:#f1f1f1"></div>
<div class="a" style="left:656.52px;top:379.01px;width:9.81px;height:9.86px;background:#f1f1f1"></div>
<div class="a" style="left:666.03px;top:379.01px;width:9.81px;height:9.86px;background:#f1f1f1"></div>
<div class="a" style="left:675.54px;top:379.01px;width:9.81px;height:9.86px;background:#f1f1f1"></div>
<div class="a" style="left:685.05px;top:379.01px;width:9.81px;height:9.86px;background:#f1f1f1"></div>
<div class="a" style="left:694.56px;top:379.01px;width:4.44px;height:9.86px;background:#f1f1f1"></div>
<div class="a" style="left:494.85px;top:388.57px;width:9.81px;height:9.86px;background:#e7ecf0"></div>
<div class="a" style="left:504.36px;top:388.57px;width:9.81px;height:9.86px;background:#e7ecf0"></div>
<div class="a" style="left:513.87px;top:388.57px;width:9.81px;height:9.86px;background:#e7ecf0"></div>
<div class="a" style="left:523.38px;top:388.57px;width:9.81px;height:9.86px;background:#e7ecf0"></div>
<div class="a" style="left:532.89px;top:388.57px;width:9.81px;height:9.86px;background:#e7ecf0"></div>
<div class="a" style="left:542.40px;top:388.57px;width:9.81px;height:9.86px;background:#e7ecf0"></div>
<div class="a" style="left:551.91px;top:388.57px;width:9.81px;height:9.86px;background:#e7ecf0"></div>
<div class="a" style="left:561.42px;top:388.57px;width:9.81px;height:9.86px;background:#e7ecf0"></div>
<div class="a" style="left:570.93px;top:388.57px;width:9.81px;height:9.86px;background:#e7ecf0"></div>
<div class="a" style="left:580.44px;top:388.57px;width:9.81px;height:9.86px;background:#e7ecf0"></div>
<div class="a" style="left:589.95px;top:388.57px;width:9.81px;height:9.86px;background:#e7ecf0"></div>
<div class="a" style="left:599.46px;top:388.57px;width:9.81px;height:9.86px;background:#f1f1f1"></div>
<div class="a" style="left:608.97px;top:388.57px;width:9.81px;height:9.86px;background:#f1f1f1"></div>
<div class="a" style="left:618.48px;top:388.57px;width:9.81px;height:9.86px;background:#f1f1f1"></div>
<div class="a" style="left:627.99px;top:388.57px;width:9.81px;height:9.86px;background:#f1f1f1"></div>
<div class="a" style="left:637.50px;top:388.57px;width:9.81px;height:9.86px;background:#f1f1f1"></div>
<div class="a" style="left:647.01px;top:388.57px;width:9.81px;height:9.86px;background:#f1f1f1"></div>
<div class="a" style="left:656.52px;top:388.57px;width:9.81px;height:9.86px;background:#f1f1f1"></div>
<div class="a" style="left:666.03px;top:388.57px;width:9.81px;height:9.86px;background:#f1f1f1"></div>
<div class="a" style="left:675.54px;top:388.57px;width:9.81px;height:9.86px;background:#f1f1f1"></div>
<div class="a" style="left:685.05px;top:388.57px;width:9.81px;height:9.86px;background:#f1f1f1"></div>
<div class="a" style="left:694.56px;top:388.57px;width:4.44px;height:9.86px;background:#f1f1f1"></div>
<div class="a" style="left:494.85px;top:398.13px;width:9.81px;height:9.86px;background:#cddee8"></div>
<div class="a" style="left:504.36px;top:398.13px;width:9.81px;height:9.86px;background:#cbdce7"></div>
<div class="a" style="left:513.87px;top:398.13px;width:9.81px;height:9.86px;background:#d1e0e9"></div>
<div class="a" style="left:523.38px;top:398.13px;width:9.81px;height:9.86px;background:#c9dbe6"></div>
<div class="a" style="left:532.89px;top:398.13px;width:9.81px;height:9.86px;background:#cddee8"></div>
<div class="a" style="left:542.40px;top:398.13px;width:9.81px;height:9.86px;background:#cbdce7"></div>
<div class="a" style="left:551.91px;top:398.13px;width:9.81px;height:9.86px;background:#d1e0e9"></div>
<div class="a" style="left:561.42px;top:398.13px;width:9.81px;height:9.86px;background:#c9dbe6"></div>
<div class="a" style="left:570.93px;top:398.13px;width:9.81px;height:9.86px;background:#cddee8"></div>
<div class="a" style="left:580.44px;top:398.13px;width:9.81px;height:9.86px;background:#cbdce7"></div>
<div class="a" style="left:589.95px;top:398.13px;width:9.81px;height:9.86px;background:#d1e0e9"></div>
<div class="a" style="left:599.46px;top:398.13px;width:9.81px;height:9.86px;background:#f4f2f1"></div>
<div class="a" style="left:608.97px;top:398.13px;width:9.81px;height:9.86px;background:#e9eef1"></div>
<div class="a" style="left:618.48px;top:398.13px;width:9.81px;height:9.86px;background:#f1f1f1"></div>
<div class="a" style="left:627.99px;top:398.13px;width:9.81px;height:9.86px;background:#f1f1f1"></div>
<div class="a" style="left:637.50px;top:398.13px;width:9.81px;height:9.86px;background:#f1f1f1"></div>
<div class="a" style="left:647.01px;top:398.13px;width:9.81px;height:9.86px;background:#f1f1f1"></div>
<div class="a" style="left:656.52px;top:398.13px;width:9.81px;height:9.86px;background:#f1f1f1"></div>
<div class="a" style="left:666.03px;top:398.13px;width:9.81px;height:9.86px;background:#f1f1f1"></div>
<div class="a" style="left:675.54px;top:398.13px;width:9.81px;height:9.86px;background:#f1f1f1"></div>
<div class="a" style="left:685.05px;top:398.13px;width:9.81px;height:9.86px;background:#f1f1f1"></div>
<div class="a" style="left:694.56px;top:398.13px;width:4.44px;height:9.86px;background:#f1f1f1"></div>
<div class="a" style="left:494.85px;top:407.69px;width:9.81px;height:9.86px;background:#d8e3ea"></div>
<div class="a" style="left:504.36px;top:407.69px;width:9.81px;height:9.86px;background:#dce5ec"></div>
<div class="a" style="left:513.87px;top:407.69px;width:9.81px;height:9.86px;background:#dae4eb"></div>
<div class="a" style="left:523.38px;top:407.69px;width:9.81px;height:9.86px;background:#dfe7ed"></div>
<div class="a" style="left:532.89px;top:407.69px;width:9.81px;height:9.86px;background:#d8e3ea"></div>
<div class="a" style="left:542.40px;top:407.69px;width:9.81px;height:9.86px;background:#dce5ec"></div>
<div class="a" style="left:551.91px;top:407.69px;width:9.81px;height:9.86px;background:#dae4eb"></div>
<div class="a" style="left:561.42px;top:407.69px;width:9.81px;height:9.86px;background:#dfe7ed"></div>
<div class="a" style="left:570.93px;top:407.69px;width:9.81px;height:9.86px;background:#d8e3ea"></div>
<div class="a" style="left:580.44px;top:407.69px;width:9.81px;height:9.86px;background:#dce5ec"></div>
<div class="a" style="left:589.95px;top:407.69px;width:9.81px;height:9.86px;background:#dae4eb"></div>
<div class="a" style="left:599.46px;top:407.69px;width:9.81px;height:9.86px;background:#f3f1f0"></div>
<div class="a" style="left:608.97px;top:407.69px;width:9.81px;height:9.86px;background:#f4f2f1"></div>
<div class="a" style="left:618.48px;top:407.69px;width:9.81px;height:9.86px;background:#f1f1f1"></div>
<div class="a" style="left:627.99px;top:407.69px;width:9.81px;height:9.86px;background:#f1f1f1"></div>
<div class="a" style="left:637.50px;top:407.69px;width:9.81px;height:9.86px;background:#f1f1f1"></div>
<div class="a" style="left:647.01px;top:407.69px;width:9.81px;height:9.86px;background:#f1f1f1"></div>
<div class="a" style="left:656.52px;top:407.69px;width:9.81px;height:9.86px;background:#f1f1f1"></div>
<div class="a" style="left:666.03px;top:407.69px;width:9.81px;height:9.86px;background:#f1f1f1"></div>
<div class="a" style="left:675.54px;top:407.69px;width:9.81px;height:9.86px;background:#f1f1f1"></div>
<div class="a" style="left:685.05px;top:407.69px;width:9.81px;height:9.86px;background:#f1f1f1"></div>
<div class="a" style="left:694.56px;top:407.69px;width:4.44px;height:9.86px;background:#f1f1f1"></div>
<div class="a" style="left:494.85px;top:417.24px;width:9.81px;height:9.86px;background:#dfe7ed"></div>
<div class="a" style="left:504.36px;top:417.24px;width:9.81px;height:9.86px;background:#d8e3ea"></div>
<div class="a" style="left:513.87px;top:417.24px;width:9.81px;height:9.86px;background:#dce5ec"></div>
<div class="a" style="left:523.38px;top:417.24px;width:9.81px;height:9.86px;background:#dae4eb"></div>
<div class="a" style="left:532.89px;top:417.24px;width:9.81px;height:9.86px;background:#dfe7ed"></div>
<div class="a" style="left:542.40px;top:417.24px;width:9.81px;height:9.86px;background:#d8e3ea"></div>
<div class="a" style="left:551.91px;top:417.24px;width:9.81px;height:9.86px;background:#dce5ec"></div>
<div class="a" style="left:561.42px;top:417.24px;width:9.81px;height:9.86px;background:#dae4eb"></div>
<div class="a" style="left:570.93px;top:417.24px;width:9.81px;height:9.86px;background:#dfe7ed"></div>
<div class="a" style="left:580.44px;top:417.24px;width:9.81px;height:9.86px;background:#d8e3ea"></div>
<div class="a" style="left:589.95px;top:417.24px;width:9.81px;height:9.86px;background:#dce5ec"></div>
<div class="a" style="left:599.46px;top:417.24px;width:9.81px;height:9.86px;background:#dae4eb"></div>
<div class="a" style="left:608.97px;top:417.24px;width:9.81px;height:9.86px;background:#d1e0e9"></div>
<div class="a" style="left:618.48px;top:417.24px;width:9.81px;height:9.86px;background:#e7ecf0"></div>
<div class="a" style="left:627.99px;top:417.24px;width:9.81px;height:9.86px;background:#f1f1f1"></div>
<div class="a" style="left:637.50px;top:417.24px;width:9.81px;height:9.86px;background:#f1f1f1"></div>
<div class="a" style="left:647.01px;top:417.24px;width:9.81px;height:9.86px;background:#f1f1f1"></div>
<div class="a" style="left:656.52px;top:417.24px;width:9.81px;height:9.86px;background:#f1f1f1"></div>
<div class="a" style="left:666.03px;top:417.24px;width:9.81px;height:9.86px;background:#f1f1f1"></div>
<div class="a" style="left:675.54px;top:417.24px;width:9.81px;height:9.86px;background:#f1f1f1"></div>
<div class="a" style="left:685.05px;top:417.24px;width:9.81px;height:9.86px;background:#f1f1f1"></div>
<div class="a" style="left:694.56px;top:417.24px;width:4.44px;height:9.86px;background:#f1f1f1"></div>
<div class="a" style="left:494.85px;top:426.80px;width:9.81px;height:9.86px;background:#cbdce7"></div>
<div class="a" style="left:504.36px;top:426.80px;width:9.81px;height:9.86px;background:#d1e0e9"></div>
<div class="a" style="left:513.87px;top:426.80px;width:9.81px;height:9.86px;background:#c9dbe6"></div>
<div class="a" style="left:523.38px;top:426.80px;width:9.81px;height:9.86px;background:#cddee8"></div>
<div class="a" style="left:532.89px;top:426.80px;width:9.81px;height:9.86px;background:#cbdce7"></div>
<div class="a" style="left:542.40px;top:426.80px;width:9.81px;height:9.86px;background:#d1e0e9"></div>
<div class="a" style="left:551.91px;top:426.80px;width:9.81px;height:9.86px;background:#c9dbe6"></div>
<div class="a" style="left:561.42px;top:426.80px;width:9.81px;height:9.86px;background:#cddee8"></div>
<div class="a" style="left:570.93px;top:426.80px;width:9.81px;height:9.86px;background:#cbdce7"></div>
<div class="a" style="left:580.44px;top:426.80px;width:9.81px;height:9.86px;background:#d1e0e9"></div>
<div class="a" style="left:589.95px;top:426.80px;width:9.81px;height:9.86px;background:#c9dbe6"></div>
<div class="a" style="left:599.46px;top:426.80px;width:9.81px;height:9.86px;background:#e9eef1"></div>
<div class="a" style="left:608.97px;top:426.80px;width:9.81px;height:9.86px;background:#cbdce7"></div>
<div class="a" style="left:618.48px;top:426.80px;width:9.81px;height:9.86px;background:#e9eef1"></div>
<div class="a" style="left:627.99px;top:426.80px;width:9.81px;height:9.86px;background:#f1f1f1"></div>
<div class="a" style="left:637.50px;top:426.80px;width:9.81px;height:9.86px;background:#f1f1f1"></div>
<div class="a" style="left:647.01px;top:426.80px;width:9.81px;height:9.86px;background:#f1f1f1"></div>
<div class="a" style="left:656.52px;top:426.80px;width:9.81px;height:9.86px;background:#f1f1f1"></div>
<div class="a" style="left:666.03px;top:426.80px;width:9.81px;height:9.86px;background:#f1f1f1"></div>
<div class="a" style="left:675.54px;top:426.80px;width:9.81px;height:9.86px;background:#f1f1f1"></div>
<div class="a" style="left:685.05px;top:426.80px;width:9.81px;height:9.86px;background:#f1f1f1"></div>
<div class="a" style="left:694.56px;top:426.80px;width:4.44px;height:9.86px;background:#f1f1f1"></div>
<div class="a" style="left:494.85px;top:436.36px;width:9.81px;height:9.86px;background:#e4eaee"></div>
<div class="a" style="left:504.36px;top:436.36px;width:9.81px;height:9.86px;background:#e4eaee"></div>
<div class="a" style="left:513.87px;top:436.36px;width:9.81px;height:9.86px;background:#e4eaee"></div>
<div class="a" style="left:523.38px;top:436.36px;width:9.81px;height:9.86px;background:#e4eaee"></div>
<div class="a" style="left:532.89px;top:436.36px;width:9.81px;height:9.86px;background:#e4eaee"></div>
<div class="a" style="left:542.40px;top:436.36px;width:9.81px;height:9.86px;background:#e4eaee"></div>
<div class="a" style="left:551.91px;top:436.36px;width:9.81px;height:9.86px;background:#e4eaee"></div>
<div class="a" style="left:561.42px;top:436.36px;width:9.81px;height:9.86px;background:#e4eaee"></div>
<div class="a" style="left:570.93px;top:436.36px;width:9.81px;height:9.86px;background:#e4eaee"></div>
<div class="a" style="left:580.44px;top:436.36px;width:9.81px;height:9.86px;background:#e4eaee"></div>
<div class="a" style="left:589.95px;top:436.36px;width:9.81px;height:9.86px;background:#e4eaee"></div>
<div class="a" style="left:599.46px;top:436.36px;width:9.81px;height:9.86px;background:#e4eaee"></div>
<div class="a" style="left:608.97px;top:436.36px;width:9.81px;height:9.86px;background:#e4eaee"></div>
<div class="a" style="left:618.48px;top:436.36px;width:9.81px;height:9.86px;background:#e4eaee"></div>
<div class="a" style="left:627.99px;top:436.36px;width:9.81px;height:9.86px;background:#f1f1f1"></div>
<div class="a" style="left:637.50px;top:436.36px;width:9.81px;height:9.86px;background:#f1f1f1"></div>
<div class="a" style="left:647.01px;top:436.36px;width:9.81px;height:9.86px;background:#f1f1f1"></div>
<div class="a" style="left:656.52px;top:436.36px;width:9.81px;height:9.86px;background:#f1f1f1"></div>
<div class="a" style="left:666.03px;top:436.36px;width:9.81px;height:9.86px;background:#f1f1f1"></div>
<div class="a" style="left:675.54px;top:436.36px;width:9.81px;height:9.86px;background:#f1f1f1"></div>
<div class="a" style="left:685.05px;top:436.36px;width:9.81px;height:9.86px;background:#f1f1f1"></div>
<div class="a" style="left:694.56px;top:436.36px;width:4.44px;height:9.86px;background:#f1f1f1"></div>
<div class="a" style="left:494.85px;top:445.91px;width:9.81px;height:9.86px;background:#bbd4e2"></div>
<div class="a" style="left:504.36px;top:445.91px;width:9.81px;height:9.86px;background:#bfd6e3"></div>
<div class="a" style="left:513.87px;top:445.91px;width:9.81px;height:9.86px;background:#b8d2e0"></div>
<div class="a" style="left:523.38px;top:445.91px;width:9.81px;height:9.86px;background:#b7d1e0"></div>
<div class="a" style="left:532.89px;top:445.91px;width:9.81px;height:9.86px;background:#b5d0df"></div>
<div class="a" style="left:542.40px;top:445.91px;width:9.81px;height:9.86px;background:#c6dae5"></div>
<div class="a" style="left:551.91px;top:445.91px;width:9.81px;height:9.86px;background:#bed5e3"></div>
<div class="a" style="left:561.42px;top:445.91px;width:9.81px;height:9.86px;background:#c3d8e4"></div>
<div class="a" style="left:570.93px;top:445.91px;width:9.81px;height:9.86px;background:#bbd4e2"></div>
<div class="a" style="left:580.44px;top:445.91px;width:9.81px;height:9.86px;background:#bfd6e3"></div>
<div class="a" style="left:589.95px;top:445.91px;width:9.81px;height:9.86px;background:#b8d2e0"></div>
<div class="a" style="left:599.46px;top:445.91px;width:9.81px;height:9.86px;background:#d1e0e9"></div>
<div class="a" style="left:608.97px;top:445.91px;width:9.81px;height:9.86px;background:#b5d0df"></div>
<div class="a" style="left:618.48px;top:445.91px;width:9.81px;height:9.86px;background:#e7ecf0"></div>
<div class="a" style="left:627.99px;top:445.91px;width:9.81px;height:9.86px;background:#f4f2f1"></div>
<div class="a" style="left:637.50px;top:445.91px;width:9.81px;height:9.86px;background:#f1f1f1"></div>
<div class="a" style="left:647.01px;top:445.91px;width:9.81px;height:9.86px;background:#f1f1f1"></div>
<div class="a" style="left:656.52px;top:445.91px;width:9.81px;height:9.86px;background:#f1f1f1"></div>
<div class="a" style="left:666.03px;top:445.91px;width:9.81px;height:9.86px;background:#f1f1f1"></div>
<div class="a" style="left:675.54px;top:445.91px;width:9.81px;height:9.86px;background:#f1f1f1"></div>
<div class="a" style="left:685.05px;top:445.91px;width:9.81px;height:9.86px;background:#f1f1f1"></div>
<div class="a" style="left:694.56px;top:445.91px;width:4.44px;height:9.86px;background:#f1f1f1"></div>
<div class="a" style="left:494.85px;top:455.47px;width:9.81px;height:9.86px;background:#f3f1f0"></div>
<div class="a" style="left:504.36px;top:455.47px;width:9.81px;height:9.86px;background:#f4f2f1"></div>
<div class="a" style="left:513.87px;top:455.47px;width:9.81px;height:9.86px;background:#f3f1f0"></div>
<div class="a" style="left:523.38px;top:455.47px;width:9.81px;height:9.86px;background:#f4f2f1"></div>
<div class="a" style="left:532.89px;top:455.47px;width:9.81px;height:9.86px;background:#f3f1f0"></div>
<div class="a" style="left:542.40px;top:455.47px;width:9.81px;height:9.86px;background:#f4f2f1"></div>
<div class="a" style="left:551.91px;top:455.47px;width:9.81px;height:9.86px;background:#f3f1f0"></div>
<div class="a" style="left:561.42px;top:455.47px;width:9.81px;height:9.86px;background:#f4f2f1"></div>
<div class="a" style="left:570.93px;top:455.47px;width:9.81px;height:9.86px;background:#f3f1f0"></div>
<div class="a" style="left:580.44px;top:455.47px;width:9.81px;height:9.86px;background:#f4f2f1"></div>
<div class="a" style="left:589.95px;top:455.47px;width:9.81px;height:9.86px;background:#f3f1f0"></div>
<div class="a" style="left:599.46px;top:455.47px;width:9.81px;height:9.86px;background:#f4f2f1"></div>
<div class="a" style="left:608.97px;top:455.47px;width:9.81px;height:9.86px;background:#f3f1f0"></div>
<div class="a" style="left:618.48px;top:455.47px;width:9.81px;height:9.86px;background:#f4f2f1"></div>
<div class="a" style="left:627.99px;top:455.47px;width:9.81px;height:9.86px;background:#f3f1f0"></div>
<div class="a" style="left:637.50px;top:455.47px;width:9.81px;height:9.86px;background:#f4f2f1"></div>
<div class="a" style="left:647.01px;top:455.47px;width:9.81px;height:9.86px;background:#f3f1f0"></div>
<div class="a" style="left:656.52px;top:455.47px;width:9.81px;height:9.86px;background:#f4f2f1"></div>
<div class="a" style="left:666.03px;top:455.47px;width:9.81px;height:9.86px;background:#f3f1f0"></div>
<div class="a" style="left:675.54px;top:455.47px;width:9.81px;height:9.86px;background:#f4f2f1"></div>
<div class="a" style="left:685.05px;top:455.47px;width:9.81px;height:9.86px;background:#f3f1f0"></div>
<div class="a" style="left:694.56px;top:455.47px;width:4.44px;height:9.86px;background:#f1f1f1"></div>
<div class="a" style="left:494.85px;top:465.03px;width:9.81px;height:9.86px;background:#bed5e3"></div>
<div class="a" style="left:504.36px;top:465.03px;width:9.81px;height:9.86px;background:#c3d8e4"></div>
<div class="a" style="left:513.87px;top:465.03px;width:9.81px;height:9.86px;background:#bbd4e2"></div>
<div class="a" style="left:523.38px;top:465.03px;width:9.81px;height:9.86px;background:#bfd6e3"></div>
<div class="a" style="left:532.89px;top:465.03px;width:9.81px;height:9.86px;background:#b8d2e0"></div>
<div class="a" style="left:542.40px;top:465.03px;width:9.81px;height:9.86px;background:#b7d1e0"></div>
<div class="a" style="left:551.91px;top:465.03px;width:9.81px;height:9.86px;background:#b5d0df"></div>
<div class="a" style="left:561.42px;top:465.03px;width:9.81px;height:9.86px;background:#c6dae5"></div>
<div class="a" style="left:570.93px;top:465.03px;width:9.81px;height:9.86px;background:#bed5e3"></div>
<div class="a" style="left:580.44px;top:465.03px;width:9.81px;height:9.86px;background:#c3d8e4"></div>
<div class="a" style="left:589.95px;top:465.03px;width:9.81px;height:9.86px;background:#bbd4e2"></div>
<div class="a" style="left:599.46px;top:465.03px;width:9.81px;height:9.86px;background:#bfd6e3"></div>
<div class="a" style="left:608.97px;top:465.03px;width:9.81px;height:9.86px;background:#b8d2e0"></div>
<div class="a" style="left:618.48px;top:465.03px;width:9.81px;height:9.86px;background:#b7d1e0"></div>
<div class="a" style="left:627.99px;top:465.03px;width:9.81px;height:9.86px;background:#b5d0df"></div>
<div class="a" style="left:637.50px;top:465.03px;width:9.81px;height:9.86px;background:#c6dae5"></div>
<div class="a" style="left:647.01px;top:465.03px;width:9.81px;height:9.86px;background:#a9c9dd"></div>
<div class="a" style="left:656.52px;top:465.03px;width:9.81px;height:9.86px;background:#c3d8e4"></div>
<div class="a" style="left:666.03px;top:465.03px;width:9.81px;height:9.86px;background:#bbd4e2"></div>
<div class="a" style="left:675.54px;top:465.03px;width:9.81px;height:9.86px;background:#e4eaee"></div>
<div class="a" style="left:685.05px;top:465.03px;width:9.81px;height:9.86px;background:#f1f1f1"></div>
<div class="a" style="left:694.56px;top:465.03px;width:4.44px;height:9.86px;background:#f1f1f1"></div>
<div class="a" style="left:494.85px;top:474.58px;width:9.81px;height:9.86px;background:#f3f1f0"></div>
<div class="a" style="left:504.36px;top:474.58px;width:9.81px;height:9.86px;background:#f4f2f1"></div>
<div class="a" style="left:513.87px;top:474.58px;width:9.81px;height:9.86px;background:#f3f1f0"></div>
<div class="a" style="left:523.38px;top:474.58px;width:9.81px;height:9.86px;background:#f4f2f1"></div>
<div class="a" style="left:532.89px;top:474.58px;width:9.81px;height:9.86px;background:#f3f1f0"></div>
<div class="a" style="left:542.40px;top:474.58px;width:9.81px;height:9.86px;background:#f4f2f1"></div>
<div class="a" style="left:551.91px;top:474.58px;width:9.81px;height:9.86px;background:#f3f1f0"></div>
<div class="a" style="left:561.42px;top:474.58px;width:9.81px;height:9.86px;background:#f4f2f1"></div>
<div class="a" style="left:570.93px;top:474.58px;width:9.81px;height:9.86px;background:#f3f1f0"></div>
<div class="a" style="left:580.44px;top:474.58px;width:9.81px;height:9.86px;background:#f4f2f1"></div>
<div class="a" style="left:589.95px;top:474.58px;width:9.81px;height:9.86px;background:#f3f1f0"></div>
<div class="a" style="left:599.46px;top:474.58px;width:9.81px;height:9.86px;background:#f4f2f1"></div>
<div class="a" style="left:608.97px;top:474.58px;width:9.81px;height:9.86px;background:#f3f1f0"></div>
<div class="a" style="left:618.48px;top:474.58px;width:9.81px;height:9.86px;background:#f4f2f1"></div>
<div class="a" style="left:627.99px;top:474.58px;width:9.81px;height:9.86px;background:#f3f1f0"></div>
<div class="a" style="left:637.50px;top:474.58px;width:9.81px;height:9.86px;background:#f4f2f1"></div>
<div class="a" style="left:647.01px;top:474.58px;width:9.81px;height:9.86px;background:#f3f1f0"></div>
<div class="a" style="left:656.52px;top:474.58px;width:9.81px;height:9.86px;background:#f4f2f1"></div>
<div class="a" style="left:666.03px;top:474.58px;width:9.81px;height:9.86px;background:#f3f1f0"></div>
<div class="a" style="left:675.54px;top:474.58px;width:9.81px;height:9.86px;background:#f4f2f1"></div>
<div class="a" style="left:685.05px;top:474.58px;width:9.81px;height:9.86px;background:#f3f1f0"></div>
<div class="a" style="left:694.56px;top:474.58px;width:4.44px;height:9.86px;background:#f1f1f1"></div>
<div class="a" style="left:494.85px;top:484.14px;width:9.81px;height:9.86px;background:#b5d0df"></div>
<div class="a" style="left:504.36px;top:484.14px;width:9.81px;height:9.86px;background:#c6dae5"></div>
<div class="a" style="left:513.87px;top:484.14px;width:9.81px;height:9.86px;background:#bed5e3"></div>
<div class="a" style="left:523.38px;top:484.14px;width:9.81px;height:9.86px;background:#c3d8e4"></div>
<div class="a" style="left:532.89px;top:484.14px;width:9.81px;height:9.86px;background:#e9eef1"></div>
<div class="a" style="left:542.40px;top:484.14px;width:9.81px;height:9.86px;background:#bfd6e3"></div>
<div class="a" style="left:551.91px;top:484.14px;width:9.81px;height:9.86px;background:#b8d2e0"></div>
<div class="a" style="left:561.42px;top:484.14px;width:9.81px;height:9.86px;background:#b7d1e0"></div>
<div class="a" style="left:570.93px;top:484.14px;width:9.81px;height:9.86px;background:#b5d0df"></div>
<div class="a" style="left:580.44px;top:484.14px;width:9.81px;height:9.86px;background:#c6dae5"></div>
<div class="a" style="left:589.95px;top:484.14px;width:9.81px;height:9.86px;background:#bed5e3"></div>
<div class="a" style="left:599.46px;top:484.14px;width:9.81px;height:9.86px;background:#c3d8e4"></div>
<div class="a" style="left:608.97px;top:484.14px;width:9.81px;height:9.86px;background:#bbd4e2"></div>
<div class="a" style="left:618.48px;top:484.14px;width:9.81px;height:9.86px;background:#bfd6e3"></div>
<div class="a" style="left:627.99px;top:484.14px;width:9.81px;height:9.86px;background:#b8d2e0"></div>
<div class="a" style="left:637.50px;top:484.14px;width:9.81px;height:9.86px;background:#b7d1e0"></div>
<div class="a" style="left:647.01px;top:484.14px;width:9.81px;height:9.86px;background:#b5d0df"></div>
<div class="a" style="left:656.52px;top:484.14px;width:9.81px;height:9.86px;background:#a9c9dd"></div>
<div class="a" style="left:666.03px;top:484.14px;width:9.81px;height:9.86px;background:#bed5e3"></div>
<div class="a" style="left:675.54px;top:484.14px;width:9.81px;height:9.86px;background:#c3d8e4"></div>
<div class="a" style="left:685.05px;top:484.14px;width:9.81px;height:9.86px;background:#bbd4e2"></div>
<div class="a" style="left:694.56px;top:484.14px;width:4.44px;height:9.86px;background:#f1f1f1"></div>
<div class="a" style="left:494.85px;top:493.70px;width:9.81px;height:9.86px;background:#e4eaee"></div>
<div class="a" style="left:504.36px;top:493.70px;width:9.81px;height:9.86px;background:#e4eaee"></div>
<div class="a" style="left:513.87px;top:493.70px;width:9.81px;height:9.86px;background:#e4eaee"></div>
<div class="a" style="left:523.38px;top:493.70px;width:9.81px;height:9.86px;background:#e4eaee"></div>
<div class="a" style="left:532.89px;top:493.70px;width:9.81px;height:9.86px;background:#e4eaee"></div>
<div class="a" style="left:542.40px;top:493.70px;width:9.81px;height:9.86px;background:#e4eaee"></div>
<div class="a" style="left:551.91px;top:493.70px;width:9.81px;height:9.86px;background:#e4eaee"></div>
<div class="a" style="left:561.42px;top:493.70px;width:9.81px;height:9.86px;background:#e4eaee"></div>
<div class="a" style="left:570.93px;top:493.70px;width:9.81px;height:9.86px;background:#e4eaee"></div>
<div class="a" style="left:580.44px;top:493.70px;width:9.81px;height:9.86px;background:#e4eaee"></div>
<div class="a" style="left:589.95px;top:493.70px;width:9.81px;height:9.86px;background:#e4eaee"></div>
<div class="a" style="left:599.46px;top:493.70px;width:9.81px;height:9.86px;background:#e4eaee"></div>
<div class="a" style="left:608.97px;top:493.70px;width:9.81px;height:9.86px;background:#e4eaee"></div>
<div class="a" style="left:618.48px;top:493.70px;width:9.81px;height:9.86px;background:#e4eaee"></div>
<div class="a" style="left:627.99px;top:493.70px;width:9.81px;height:9.86px;background:#e4eaee"></div>
<div class="a" style="left:637.50px;top:493.70px;width:9.81px;height:9.86px;background:#e4eaee"></div>
<div class="a" style="left:647.01px;top:493.70px;width:9.81px;height:9.86px;background:#e4eaee"></div>
<div class="a" style="left:656.52px;top:493.70px;width:9.81px;height:9.86px;background:#e4eaee"></div>
<div class="a" style="left:666.03px;top:493.70px;width:9.81px;height:9.86px;background:#e4eaee"></div>
<div class="a" style="left:675.54px;top:493.70px;width:9.81px;height:9.86px;background:#e4eaee"></div>
<div class="a" style="left:685.05px;top:493.70px;width:9.81px;height:9.86px;background:#e4eaee"></div>
<div class="a" style="left:694.56px;top:493.70px;width:4.44px;height:9.86px;background:#f1f1f1"></div>
<div class="a" style="left:494.85px;top:503.25px;width:9.81px;height:9.86px;background:#cbdce7"></div>
<div class="a" style="left:504.36px;top:503.25px;width:9.81px;height:9.86px;background:#d1e0e9"></div>
<div class="a" style="left:513.87px;top:503.25px;width:9.81px;height:9.86px;background:#c9dbe6"></div>
<div class="a" style="left:523.38px;top:503.25px;width:9.81px;height:9.86px;background:#cddee8"></div>
<div class="a" style="left:532.89px;top:503.25px;width:9.81px;height:9.86px;background:#e7ecf0"></div>
<div class="a" style="left:542.40px;top:503.25px;width:9.81px;height:9.86px;background:#d1e0e9"></div>
<div class="a" style="left:551.91px;top:503.25px;width:9.81px;height:9.86px;background:#c9dbe6"></div>
<div class="a" style="left:561.42px;top:503.25px;width:9.81px;height:9.86px;background:#cddee8"></div>
<div class="a" style="left:570.93px;top:503.25px;width:9.81px;height:9.86px;background:#cbdce7"></div>
<div class="a" style="left:580.44px;top:503.25px;width:9.81px;height:9.86px;background:#d1e0e9"></div>
<div class="a" style="left:589.95px;top:503.25px;width:9.81px;height:9.86px;background:#c9dbe6"></div>
<div class="a" style="left:599.46px;top:503.25px;width:9.81px;height:9.86px;background:#cddee8"></div>
<div class="a" style="left:608.97px;top:503.25px;width:9.81px;height:9.86px;background:#cbdce7"></div>
<div class="a" style="left:618.48px;top:503.25px;width:9.81px;height:9.86px;background:#d1e0e9"></div>
<div class="a" style="left:627.99px;top:503.25px;width:9.81px;height:9.86px;background:#c9dbe6"></div>
<div class="a" style="left:637.50px;top:503.25px;width:9.81px;height:9.86px;background:#cddee8"></div>
<div class="a" style="left:647.01px;top:503.25px;width:9.81px;height:9.86px;background:#cbdce7"></div>
<div class="a" style="left:656.52px;top:503.25px;width:9.81px;height:9.86px;background:#b7d1e0"></div>
<div class="a" style="left:666.03px;top:503.25px;width:9.81px;height:9.86px;background:#c9dbe6"></div>
<div class="a" style="left:675.54px;top:503.25px;width:9.81px;height:9.86px;background:#cddee8"></div>
<div class="a" style="left:685.05px;top:503.25px;width:9.81px;height:9.86px;background:#cbdce7"></div>
<div class="a" style="left:694.56px;top:503.25px;width:4.44px;height:9.86px;background:#f1f1f1"></div>
<div class="a" style="left:494.85px;top:512.81px;width:9.81px;height:9.86px;background:#dce5ec"></div>
<div class="a" style="left:504.36px;top:512.81px;width:9.81px;height:9.86px;background:#dae4eb"></div>
<div class="a" style="left:513.87px;top:512.81px;width:9.81px;height:9.86px;background:#dfe7ed"></div>
<div class="a" style="left:523.38px;top:512.81px;width:9.81px;height:9.86px;background:#d8e3ea"></div>
<div class="a" style="left:532.89px;top:512.81px;width:9.81px;height:9.86px;background:#e9eef1"></div>
<div class="a" style="left:542.40px;top:512.81px;width:9.81px;height:9.86px;background:#cbdce7"></div>
<div class="a" style="left:551.91px;top:512.81px;width:9.81px;height:9.86px;background:#dfe7ed"></div>
<div class="a" style="left:561.42px;top:512.81px;width:9.81px;height:9.86px;background:#d8e3ea"></div>
<div class="a" style="left:570.93px;top:512.81px;width:9.81px;height:9.86px;background:#dce5ec"></div>
<div class="a" style="left:580.44px;top:512.81px;width:9.81px;height:9.86px;background:#dae4eb"></div>
<div class="a" style="left:589.95px;top:512.81px;width:9.81px;height:9.86px;background:#dfe7ed"></div>
<div class="a" style="left:599.46px;top:512.81px;width:9.81px;height:9.86px;background:#d8e3ea"></div>
<div class="a" style="left:608.97px;top:512.81px;width:9.81px;height:9.86px;background:#dce5ec"></div>
<div class="a" style="left:618.48px;top:512.81px;width:9.81px;height:9.86px;background:#dae4eb"></div>
<div class="a" style="left:627.99px;top:512.81px;width:9.81px;height:9.86px;background:#dfe7ed"></div>
<div class="a" style="left:637.50px;top:512.81px;width:9.81px;height:9.86px;background:#d8e3ea"></div>
<div class="a" style="left:647.01px;top:512.81px;width:9.81px;height:9.86px;background:#dce5ec"></div>
<div class="a" style="left:656.52px;top:512.81px;width:9.81px;height:9.86px;background:#dae4eb"></div>
<div class="a" style="left:666.03px;top:512.81px;width:9.81px;height:9.86px;background:#dfe7ed"></div>
<div class="a" style="left:675.54px;top:512.81px;width:9.81px;height:9.86px;background:#d8e3ea"></div>
<div class="a" style="left:685.05px;top:512.81px;width:9.81px;height:9.86px;background:#dce5ec"></div>
<div class="a" style="left:694.56px;top:512.81px;width:4.44px;height:9.86px;background:#f1f1f1"></div>
<div class="a" style="left:494.85px;top:522.37px;width:9.81px;height:9.86px;background:#d8e3ea"></div>
<div class="a" style="left:504.36px;top:522.37px;width:9.81px;height:9.86px;background:#dce5ec"></div>
<div class="a" style="left:513.87px;top:522.37px;width:9.81px;height:9.86px;background:#dae4eb"></div>
<div class="a" style="left:523.38px;top:522.37px;width:9.81px;height:9.86px;background:#dfe7ed"></div>
<div class="a" style="left:532.89px;top:522.37px;width:9.81px;height:9.86px;background:#d8e3ea"></div>
<div class="a" style="left:542.40px;top:522.37px;width:9.81px;height:9.86px;background:#dce5ec"></div>
<div class="a" style="left:551.91px;top:522.37px;width:9.81px;height:9.86px;background:#dae4eb"></div>
<div class="a" style="left:561.42px;top:522.37px;width:9.81px;height:9.86px;background:#dfe7ed"></div>
<div class="a" style="left:570.93px;top:522.37px;width:9.81px;height:9.86px;background:#d8e3ea"></div>
<div class="a" style="left:580.44px;top:522.37px;width:9.81px;height:9.86px;background:#dce5ec"></div>
<div class="a" style="left:589.95px;top:522.37px;width:9.81px;height:9.86px;background:#dae4eb"></div>
<div class="a" style="left:599.46px;top:522.37px;width:9.81px;height:9.86px;background:#dfe7ed"></div>
<div class="a" style="left:608.97px;top:522.37px;width:9.81px;height:9.86px;background:#d8e3ea"></div>
<div class="a" style="left:618.48px;top:522.37px;width:9.81px;height:9.86px;background:#dce5ec"></div>
<div class="a" style="left:627.99px;top:522.37px;width:9.81px;height:9.86px;background:#dae4eb"></div>
<div class="a" style="left:637.50px;top:522.37px;width:9.81px;height:9.86px;background:#dfe7ed"></div>
<div class="a" style="left:647.01px;top:522.37px;width:9.81px;height:9.86px;background:#c9dbe6"></div>
<div class="a" style="left:656.52px;top:522.37px;width:9.81px;height:9.86px;background:#dce5ec"></div>
<div class="a" style="left:666.03px;top:522.37px;width:9.81px;height:9.86px;background:#dae4eb"></div>
<div class="a" style="left:675.54px;top:522.37px;width:9.81px;height:9.86px;background:#f3f1f0"></div>
<div class="a" style="left:685.05px;top:522.37px;width:9.81px;height:9.86px;background:#f4f2f1"></div>
<div class="a" style="left:694.56px;top:522.37px;width:4.44px;height:9.86px;background:#f1f1f1"></div>
<div class="a" style="left:494.85px;top:531.93px;width:9.81px;height:9.86px;background:#d1e0e9"></div>
<div class="a" style="left:504.36px;top:531.93px;width:9.81px;height:9.86px;background:#c9dbe6"></div>
<div class="a" style="left:513.87px;top:531.93px;width:9.81px;height:9.86px;background:#cddee8"></div>
<div class="a" style="left:523.38px;top:531.93px;width:9.81px;height:9.86px;background:#cbdce7"></div>
<div class="a" style="left:532.89px;top:531.93px;width:9.81px;height:9.86px;background:#d1e0e9"></div>
<div class="a" style="left:542.40px;top:531.93px;width:9.81px;height:9.86px;background:#c9dbe6"></div>
<div class="a" style="left:551.91px;top:531.93px;width:9.81px;height:9.86px;background:#cddee8"></div>
<div class="a" style="left:561.42px;top:531.93px;width:9.81px;height:9.86px;background:#cbdce7"></div>
<div class="a" style="left:570.93px;top:531.93px;width:9.81px;height:9.86px;background:#d1e0e9"></div>
<div class="a" style="left:580.44px;top:531.93px;width:9.81px;height:9.86px;background:#c9dbe6"></div>
<div class="a" style="left:589.95px;top:531.93px;width:9.81px;height:9.86px;background:#cddee8"></div>
<div class="a" style="left:599.46px;top:531.93px;width:9.81px;height:9.86px;background:#cbdce7"></div>
<div class="a" style="left:608.97px;top:531.93px;width:9.81px;height:9.86px;background:#d1e0e9"></div>
<div class="a" style="left:618.48px;top:531.93px;width:9.81px;height:9.86px;background:#c9dbe6"></div>
<div class="a" style="left:627.99px;top:531.93px;width:9.81px;height:9.86px;background:#cddee8"></div>
<div class="a" style="left:637.50px;top:531.93px;width:9.81px;height:9.86px;background:#cbdce7"></div>
<div class="a" style="left:647.01px;top:531.93px;width:9.81px;height:9.86px;background:#c3d8e4"></div>
<div class="a" style="left:656.52px;top:531.93px;width:9.81px;height:9.86px;background:#c9dbe6"></div>
<div class="a" style="left:666.03px;top:531.93px;width:9.81px;height:9.86px;background:#cddee8"></div>
<div class="a" style="left:675.54px;top:531.93px;width:9.81px;height:9.86px;background:#f1f1f1"></div>
<div class="a" style="left:685.05px;top:531.93px;width:9.81px;height:9.86px;background:#f1f1f1"></div>
<div class="a" style="left:694.56px;top:531.93px;width:4.44px;height:9.86px;background:#f1f1f1"></div>
<div class="a" style="left:494.85px;top:541.48px;width:9.81px;height:9.86px;background:#e9eef1"></div>
<div class="a" style="left:504.36px;top:541.48px;width:9.81px;height:9.86px;background:#e9eef1"></div>
<div class="a" style="left:513.87px;top:541.48px;width:9.81px;height:9.86px;background:#e9eef1"></div>
<div class="a" style="left:523.38px;top:541.48px;width:9.81px;height:9.86px;background:#e9eef1"></div>
<div class="a" style="left:532.89px;top:541.48px;width:9.81px;height:9.86px;background:#e9eef1"></div>
<div class="a" style="left:542.40px;top:541.48px;width:9.81px;height:9.86px;background:#e9eef1"></div>
<div class="a" style="left:551.91px;top:541.48px;width:9.81px;height:9.86px;background:#e9eef1"></div>
<div class="a" style="left:561.42px;top:541.48px;width:9.81px;height:9.86px;background:#e9eef1"></div>
<div class="a" style="left:570.93px;top:541.48px;width:9.81px;height:9.86px;background:#e9eef1"></div>
<div class="a" style="left:580.44px;top:541.48px;width:9.81px;height:9.86px;background:#e9eef1"></div>
<div class="a" style="left:589.95px;top:541.48px;width:9.81px;height:9.86px;background:#f4f2f1"></div>
<div class="a" style="left:599.46px;top:541.48px;width:9.81px;height:9.86px;background:#f3f1f0"></div>
<div class="a" style="left:608.97px;top:541.48px;width:9.81px;height:9.86px;background:#f4f2f1"></div>
<div class="a" style="left:618.48px;top:541.48px;width:9.81px;height:9.86px;background:#f3f1f0"></div>
<div class="a" style="left:627.99px;top:541.48px;width:9.81px;height:9.86px;background:#f4f2f1"></div>
<div class="a" style="left:637.50px;top:541.48px;width:9.81px;height:9.86px;background:#f3f1f0"></div>
<div class="a" style="left:647.01px;top:541.48px;width:9.81px;height:9.86px;background:#f4f2f1"></div>
<div class="a" style="left:656.52px;top:541.48px;width:9.81px;height:9.86px;background:#f3f1f0"></div>
<div class="a" style="left:666.03px;top:541.48px;width:9.81px;height:9.86px;background:#f4f2f1"></div>
<div class="a" style="left:675.54px;top:541.48px;width:9.81px;height:9.86px;background:#f1f1f1"></div>
<div class="a" style="left:685.05px;top:541.48px;width:9.81px;height:9.86px;background:#f1f1f1"></div>
<div class="a" style="left:694.56px;top:541.48px;width:4.44px;height:9.86px;background:#f1f1f1"></div>
<div class="a" style="left:494.85px;top:551.04px;width:9.81px;height:9.86px;background:#c6dae5"></div>
<div class="a" style="left:504.36px;top:551.04px;width:9.81px;height:9.86px;background:#bed5e3"></div>
<div class="a" style="left:513.87px;top:551.04px;width:9.81px;height:9.86px;background:#c3d8e4"></div>
<div class="a" style="left:523.38px;top:551.04px;width:9.81px;height:9.86px;background:#bbd4e2"></div>
<div class="a" style="left:532.89px;top:551.04px;width:9.81px;height:9.86px;background:#bfd6e3"></div>
<div class="a" style="left:542.40px;top:551.04px;width:9.81px;height:9.86px;background:#b8d2e0"></div>
<div class="a" style="left:551.91px;top:551.04px;width:9.81px;height:9.86px;background:#b7d1e0"></div>
<div class="a" style="left:561.42px;top:551.04px;width:9.81px;height:9.86px;background:#b5d0df"></div>
<div class="a" style="left:570.93px;top:551.04px;width:9.81px;height:9.86px;background:#c6dae5"></div>
<div class="a" style="left:580.44px;top:551.04px;width:9.81px;height:9.86px;background:#bed5e3"></div>
<div class="a" style="left:589.95px;top:551.04px;width:9.81px;height:9.86px;background:#f1f1f1"></div>
<div class="a" style="left:599.46px;top:551.04px;width:9.81px;height:9.86px;background:#f1f1f1"></div>
<div class="a" style="left:608.97px;top:551.04px;width:9.81px;height:9.86px;background:#f1f1f1"></div>
<div class="a" style="left:618.48px;top:551.04px;width:9.81px;height:9.86px;background:#f1f1f1"></div>
<div class="a" style="left:627.99px;top:551.04px;width:9.81px;height:9.86px;background:#f1f1f1"></div>
<div class="a" style="left:637.50px;top:551.04px;width:9.81px;height:9.86px;background:#f1f1f1"></div>
<div class="a" style="left:647.01px;top:551.04px;width:9.81px;height:9.86px;background:#f1f1f1"></div>
<div class="a" style="left:656.52px;top:551.04px;width:9.81px;height:9.86px;background:#f1f1f1"></div>
<div class="a" style="left:666.03px;top:551.04px;width:9.81px;height:9.86px;background:#f1f1f1"></div>
<div class="a" style="left:675.54px;top:551.04px;width:9.81px;height:9.86px;background:#f1f1f1"></div>
<div class="a" style="left:685.05px;top:551.04px;width:9.81px;height:9.86px;background:#f1f1f1"></div>
<div class="a" style="left:694.56px;top:551.04px;width:4.44px;height:9.86px;background:#f1f1f1"></div>
<div class="t td" style="left:173.2px;top:575.2px;font-size:8.7px;">Showing 1 to 10 of 113 entries</div>
<div class="pg" style="left:876.7px;top:570.3px;width:248.3px;height:22.5px"><div class="pgi" style="left:0.0px;width:51.6px;border-left:none;background:#fff;color:#777;">Previous</div><div class="pgi" style="left:51.6px;width:22.4px;background:#337ab7;color:#fff;border-color:#337ab7;">1</div><div class="pgi" style="left:74.0px;width:21.8px;">2</div><div class="pgi" style="left:95.8px;width:22.0px;">3</div><div class="pgi" style="left:117.8px;width:21.1px;">4</div><div class="pgi" style="left:138.9px;width:22.0px;">5</div><div class="pgi" style="left:160.9px;width:25.7px;background:#fff;color:#777;">&hellip;</div><div class="pgi" style="left:186.6px;width:27.2px;">12</div><div class="pgi" style="left:213.8px;width:34.5px;">Next</div></div>
<div id="foot">Copyright &copy; 2015-2017 <span style="color:#3c8dbc">FraudScore</span>. All rights reserved.</div>
</div>
</body></html>
